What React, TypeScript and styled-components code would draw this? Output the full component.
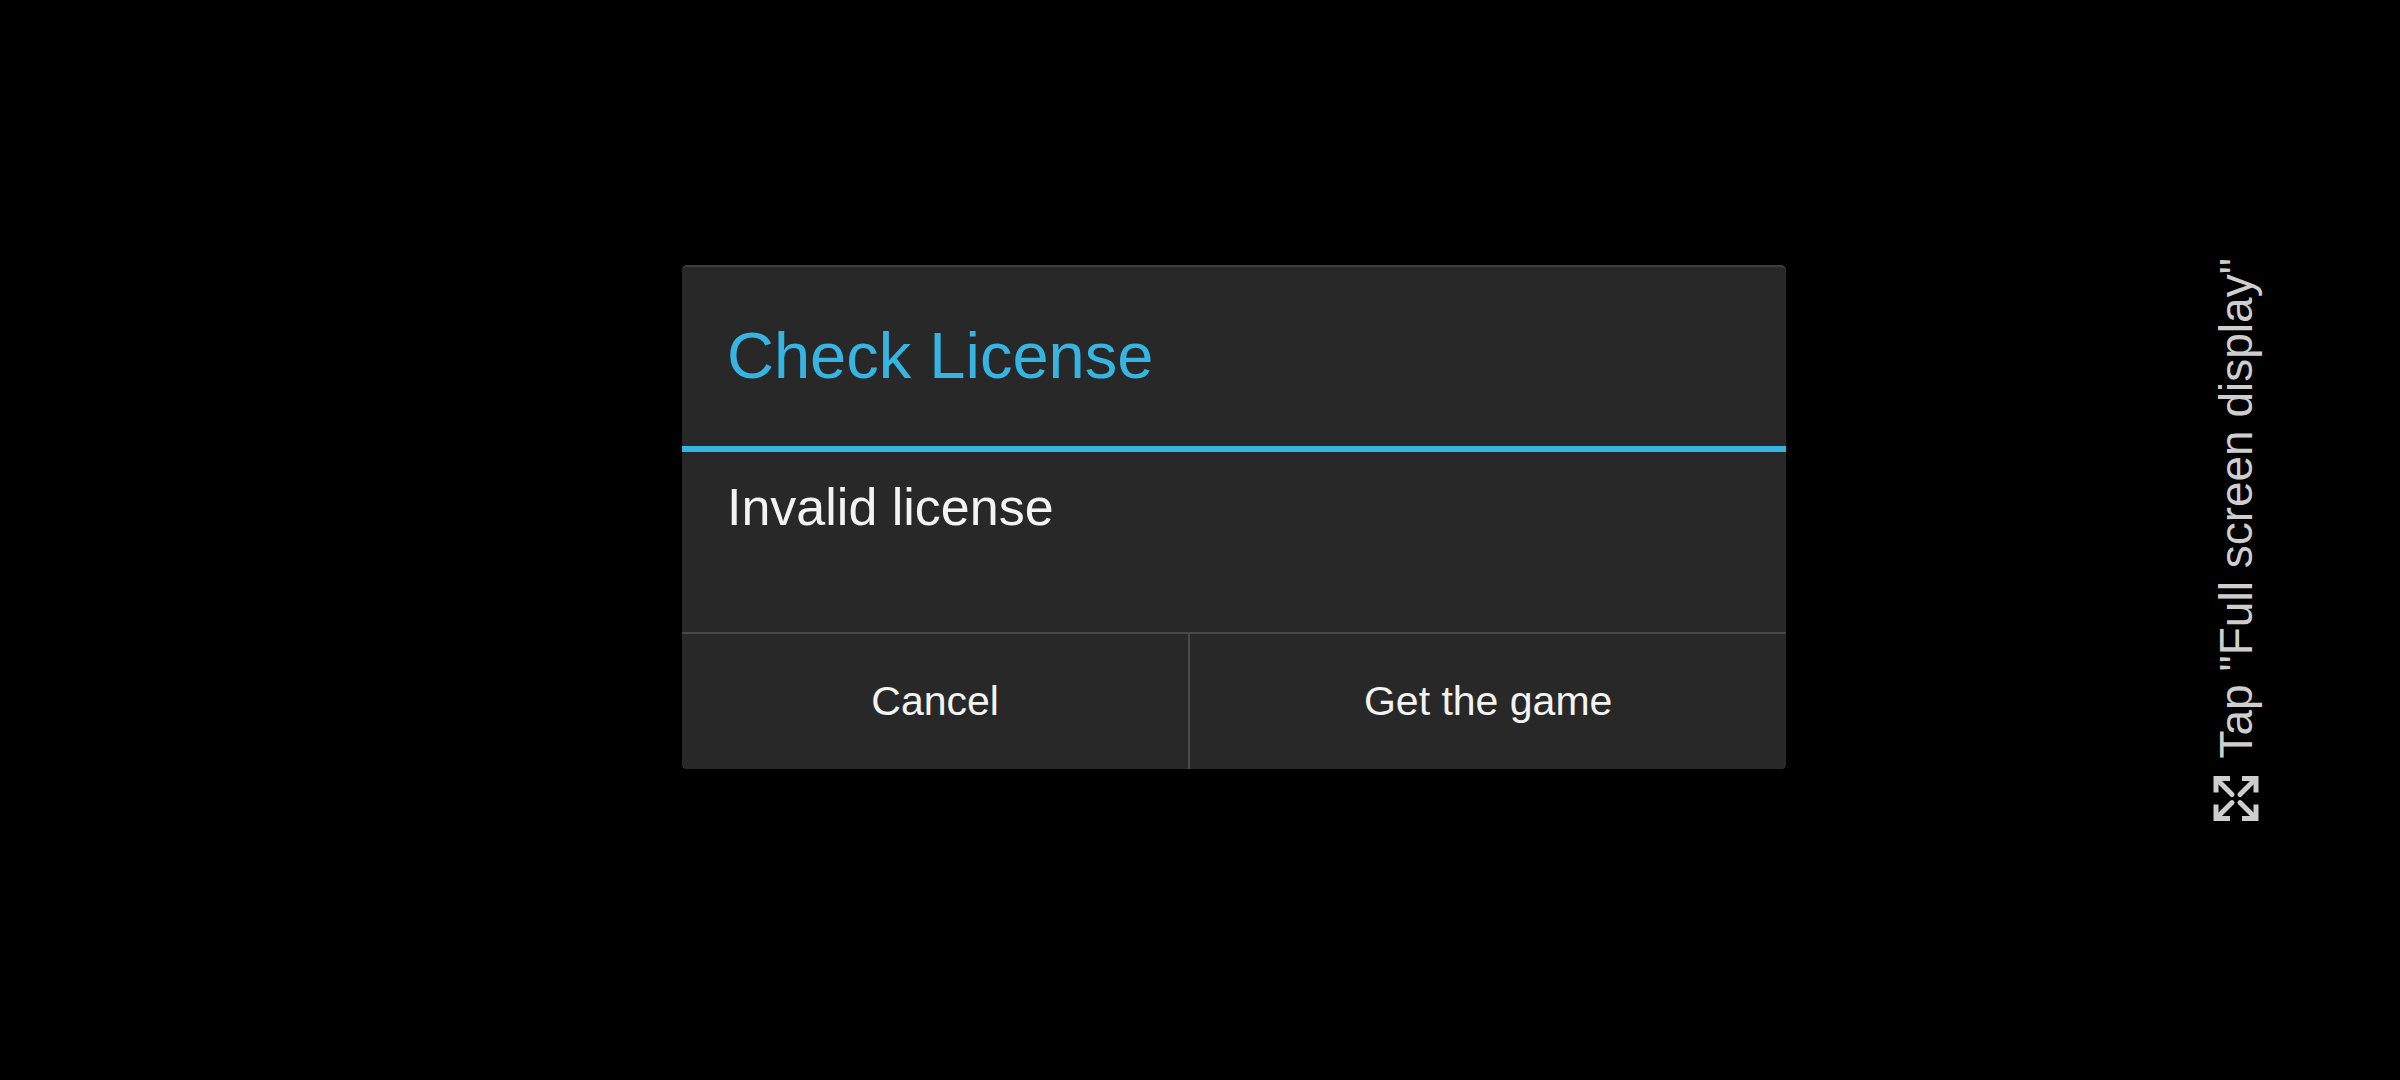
import React from "react";
import styled, { createGlobalStyle } from "styled-components";

const GlobalStyle = createGlobalStyle`
  *, *::before, *::after { box-sizing: border-box; }
  body {
    margin: 0;
    background: #000;
    font-family: "Liberation Sans", Arial, sans-serif;
  }
`;

const Screen = styled.main`
  min-height: 100vh;
  display: grid;
  grid-template-columns: 1fr 46% 1fr;
  align-items: center;
  background: #000;
`;

const Dialog = styled.section`
  grid-column: 2;
  margin: 0 -34px 46px 34px;
  overflow: hidden;
  border-top: 2px solid #3e3e3e;
  border-radius: 5px;
  background: #282828;
  color: #f3f3f3;
`;

const Title = styled.h1`
  margin: 0;
  padding: 49px 45px 50px;
  border-bottom: 6px solid #37b5e2;
  color: #37b5e2;
  font-size: 65px;
  font-weight: 400;
  line-height: 80px;
`;

const Message = styled.p`
  margin: 0;
  padding: 25px 45px 95px;
  font-size: 52px;
  line-height: 60px;
`;

const Actions = styled.div`
  display: grid;
  grid-template-columns: 17fr 20fr;
  gap: 2px;
  padding-top: 2px;
  background: #484848;
`;

const ActionButton = styled.button`
  border: 0;
  padding: 43px 16px 44px;
  background: #282828;
  color: inherit;
  font-family: inherit;
  font-size: 41px;
  line-height: 48px;
  cursor: pointer;
`;

const DisplayHint = styled.button`
  grid-column: 3;
  justify-self: end;
  display: flex;
  align-items: center;
  gap: 17px;
  margin-right: 138px;
  border: 0;
  padding: 0;
  background: none;
  color: #cecece;
  font-family: inherit;
  font-size: 46px;
  line-height: 52px;
  white-space: nowrap;
  writing-mode: vertical-rl;
  transform: rotate(180deg);
  cursor: pointer;
`;

const Icon = styled.svg`
  display: block;
  width: 46px;
  height: 46px;
`;

function ExpandIcon() {
  return (
    <Icon viewBox="0 0 46 46" aria-hidden="true">
      <g fill="none" stroke="currentColor" strokeWidth="5">
        {[0, 90, 180, 270].map((angle) => (
          <g key={angle} transform={`rotate(${angle} 23 23)`}>
            <path d="M3 17V3H17" />
            <path d="M4 4L19 19" strokeLinecap="round" />
          </g>
        ))}
      </g>
    </Icon>
  );
}

export default function App() {
  return (
    <>
      <GlobalStyle />
      <Screen>
        <Dialog role="dialog" aria-labelledby="title" aria-describedby="message">
          <Title id="title">Check License</Title>
          <Message id="message">Invalid license</Message>
          <Actions>
            <ActionButton type="button">Cancel</ActionButton>
            <ActionButton type="button">Get the game</ActionButton>
          </Actions>
        </Dialog>
        <DisplayHint type="button">
          <ExpandIcon />
          <span>Tap "Full screen display"</span>
        </DisplayHint>
      </Screen>
    </>
  );
}
